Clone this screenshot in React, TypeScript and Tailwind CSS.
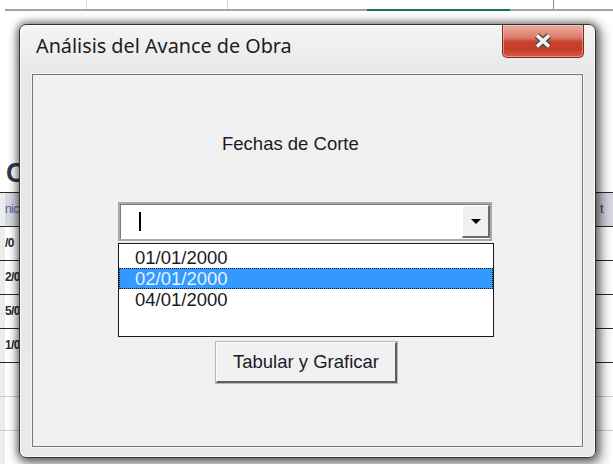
import React from "react";

type SheetRow = {
  left: string;
  right?: string;
  head?: boolean;
  dark?: boolean;
};

const sheetRows: SheetRow[] = [
  { left: "nic", right: "t", head: true, dark: true },
  { left: "/0", dark: true },
  { left: "2/0", dark: true },
  { left: "5/0", dark: true },
  { left: "1/0", dark: true },
  { left: "", dark: true },
  { left: "" },
  { left: "" },
];

const fechas = ["01/01/2000", "02/01/2000", "04/01/2000"];

const CloseGlyph = () => (
  <svg width="20" height="16" viewBox="0 0 20 16">
    <path d="M4 2.5 L16 13.5 M16 2.5 L4 13.5" stroke="#4b4b4b" strokeWidth="6.4" />
    <path d="M4 2.5 L16 13.5 M16 2.5 L4 13.5" stroke="#f4f4f4" strokeWidth="3.6" />
  </svg>
);

const Backdrop = () => {
  return (
    <div className="flex flex-col w-[613px] h-[464px] bg-white font-['Liberation_Sans',Arial,sans-serif]">
      <div className="h-[9px] flex">
        <div className="w-[87px] border-r border-[#d6d6d6]" />
        <div className="w-[141px] border-r border-[#d6d6d6]" />
        <div className="w-[326px] border-r border-[#8c8c8c]" />
      </div>
      <div className="h-[2px] flex bg-[#a3a3a3] ml-[5px]">
        <div className="w-[362px]" />
        <div className="w-[143px] bg-[#217346]" />
      </div>
      <div className="h-[186px] flex items-end pl-[6px] pb-[5px]">
        <span className="text-[27px] leading-[27px] font-bold text-[#2b3850]">C</span>
      </div>
      {sheetRows.map((row, i) => (
        <div
          key={i}
          className={`h-[35px] flex items-center border-t ${row.dark ? "border-[#2a2a2a]" : "border-[#cfcfcf]"} ${row.head ? "bg-[#d7d8e2]" : ""}`}
        >
          <div className="w-[5px] h-full bg-[#ececec]" />
          <div className="w-[14px] whitespace-nowrap">
            <span
              className={`block text-[12px] tracking-[-0.6px] ${row.head ? "text-[#51609e]" : "text-[#2a2a36] font-bold"}`}
            >
              {row.left}
            </span>
          </div>
          <div className="flex-1" />
          <div className="w-[13px] text-[13px] text-[#3a3a44]">{row.right}</div>
        </div>
      ))}
    </div>
  );
};

const Dialog = () => {
  return (
    <div className="absolute left-[19px] top-[24px] w-[577px] h-[434px] flex flex-col rounded-[7px] border border-[#333333] bg-[linear-gradient(180deg,#f4f4f4_0%,#e7e7e7_12%,#e9e9e9_100%)] shadow-[inset_0_0_0_1px_#fbfbfb,0_0_7px_2px_rgba(0,0,0,0.4),3px_4px_12px_3px_rgba(0,0,0,0.4)]">
      {/* title bar */}
      <div className="h-[49px] flex items-start justify-between pl-[16px] pr-[11px]">
        <span className="mt-[8px] text-[19.8px] leading-[25px] text-[#1c1c1c] font-['Noto_Sans','Open_Sans',sans-serif]">
          Análisis del Avance de Obra
        </span>
        <div className="w-[82px] h-[33px] flex items-center justify-center rounded-b-[5px] border border-t-0 border-[#7d2a1e] bg-[linear-gradient(180deg,#eab0a4_0%,#dc7a68_40%,#c84430_52%,#c53b26_75%,#d65a44_100%)] shadow-[inset_0_0_0_1px_rgba(255,220,210,0.45)]">
          <CloseGlyph />
        </div>
      </div>

      {/* client area */}
      <div className="mx-[12px] h-[373px] flex flex-col border border-[#777777] bg-[#f0f0f0] shadow-[0_0_0_1px_#f6f6f6] font-['Liberation_Sans',Tahoma,sans-serif] text-[18.5px] text-[#1b1a26]">
        <div className="mt-[58px] ml-[189px] h-[21px] leading-[21px]">Fechas de Corte</div>

        {/* combo box */}
        <div className="mt-[48px] ml-[85px] w-[374px] h-[39px] flex items-center border-2 border-[#a9a9a9] bg-white shadow-[inset_1px_1px_0_#7c7c7c]">
          <div className="ml-[19px] w-[2px] h-[19px] bg-black" />
          <div className="flex-1" />
          <div className="w-[28px] h-[33px] flex items-center justify-center bg-[#f0f0f0] border-t border-l border-t-white border-l-white border-r-2 border-b-2 border-r-[#6c6c6c] border-b-[#6c6c6c]">
            <div className="w-0 h-0 border-l-[5px] border-r-[5px] border-t-[5px] border-l-transparent border-r-transparent border-t-black" />
          </div>
        </div>

        {/* dropdown list */}
        <div className="mt-[2px] ml-[85px] w-[376px] h-[94px] flex flex-col pt-[3px] border border-[#1a1a1a] bg-white">
          {fechas.map((f, i) =>
            i === 1 ? (
              <div
                key={f}
                className="h-[21px] leading-[19px] pl-[15px] border border-dotted border-[#1f1a10] bg-[#3399ff] text-[#e6f2ff]"
              >
                {f}
              </div>
            ) : (
              <div key={f} className="h-[21px] leading-[21px] pl-[16px]">
                {f}
              </div>
            )
          )}
        </div>

        <button className="mt-[5px] ml-[183px] w-[181px] h-[41px] flex items-center justify-center bg-[#f1f1f1] border-t border-l border-t-white border-l-white border-r-2 border-b-2 border-r-[#5f5f5f] border-b-[#5f5f5f] shadow-[0_0_0_1px_#b8b8b8]">
          Tabular y Graficar
        </button>
      </div>
    </div>
  );
};

export default function App() {
  return (
    <div className="relative w-[613px] h-[464px] overflow-hidden">
      <Backdrop />
      <Dialog />
    </div>
  );
}
